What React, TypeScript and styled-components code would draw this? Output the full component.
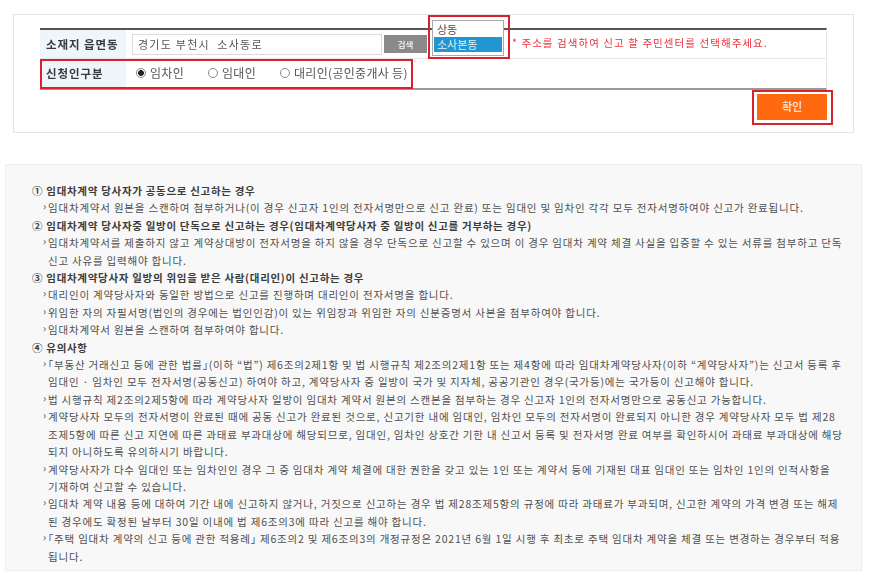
import React from "react";
import styled, { createGlobalStyle } from "styled-components";

const Global = createGlobalStyle`
  html, body { margin: 0; padding: 0; background: #fff; }
  body { font-family: "Noto Sans CJK KR", "Noto Sans", sans-serif; color: #444; }
`;
const Page = styled.div`
  width: 869px;
  height: 585px;
  overflow: hidden;
  box-sizing: border-box;
  padding: 14px 7px 0 5px;
  display: flex;
  flex-direction: column;
  gap: 31px;
  filter: blur(0.3px);
`;
const FormPanel = styled.section`
  position: relative;
  box-sizing: border-box;
  margin: 0 8px 0 8px;
  height: 119px;
  padding: 13px 26px 0 26px;
  border: 1px solid #e4e4e4;
`;
const FormTable = styled.div`
  border-top: 2px solid #555;
  border-bottom: 2px solid #999;
  border-right: 1px solid #e6e6e6;
`;
const Row = styled.div<{ $line?: boolean }>`
  display: flex;
  height: 29px;
  box-sizing: border-box;
  border-bottom: ${p => (p.$line ? "1px solid #e6e6e6" : "none")};
`;
const Label = styled.div`
  width: 86px;
  flex: none;
  box-sizing: border-box;
  padding-left: 6px;
  background: #eef5fb;
  font-size: 11.5px;
  font-weight: 700;
  line-height: 28px;
  letter-spacing: 0.9px;
  color: #3a3a3a;
  white-space: nowrap;
`;
const Cell = styled.div`
  flex: 1;
  display: flex;
  align-items: center;
  padding-left: 6px;
  min-width: 0;
`;
const AddressInput = styled.div`
  box-sizing: border-box;
  width: 250px;
  height: 21px;
  border: 1px solid #dcdcdc;
  padding-left: 5px;
  font-size: 11px;
  line-height: 18px;
  letter-spacing: 1.25px;
  color: #555;
  white-space: pre;
`;
const SearchButton = styled.div`
  width: 43px;
  height: 18px;
  margin-left: 2px;
  background: #8a8a8a;
  color: #e8e8e8;
  font-size: 8.5px;
  font-weight: 700;
  line-height: 18px;
  text-align: center;
`;
const ListBox = styled.div`
  box-sizing: border-box;
  width: 72px;
  height: 36px;
  margin: -13px 0 0 5px;
  border: 1px solid #aaa;
  background: #fff;
  padding: 1px;
  font-size: 11px;
  line-height: 14px;
  position: relative;
  z-index: 1;
`;
const ListOption = styled.div<{ $selected?: boolean }>`
  height: 15px;
  padding-left: 3px;
  background: ${p => (p.$selected ? "#2196d3" : "#fff")};
  color: ${p => (p.$selected ? "#dff1fb" : "#555")};
`;
const Note = styled.div`
  margin: -3px 0 0 8px;
  color: #ee2f3c;
  font-size: 10.5px;
  letter-spacing: 1.07px;
  white-space: nowrap;
`;
const RadioGroup = styled.div`
  display: flex;
  align-items: center;
  padding-left: 4px;
  margin-top: -2px;
`;
const RadioItem = styled.label<{ $width: number }>`
  display: flex;
  align-items: center;
  gap: 4px;
  width: ${p => p.$width}px;
  font-size: 12px;
  letter-spacing: 0.3px;
  color: #555;
  white-space: nowrap;
`;
const RadioMark = styled.span<{ $on?: boolean }>`
  box-sizing: border-box;
  flex: none;
  width: 10px;
  height: 10px;
  border-radius: 50%;
  border: 1px solid #888;
  background: ${p => (p.$on ? "radial-gradient(circle, #222 0 2.6px, #fff 3.2px)" : "#fff")};
`;
const Highlight = styled.div<{ $x: number; $y: number; $w: number; $h: number }>`
  position: absolute;
  box-sizing: border-box;
  left: ${p => p.$x}px;
  top: ${p => p.$y}px;
  width: ${p => p.$w}px;
  height: ${p => p.$h}px;
  border: 2px solid #d9202f;
  z-index: 2;
  pointer-events: none;
`;
const ConfirmBar = styled.div`
  display: flex;
  justify-content: flex-end;
  padding-top: 4px;
`;
const ConfirmButton = styled.div`
  width: 70px;
  height: 26px;
  background: #ff6a10;
  color: #f5dcc8;
  font-size: 11px;
  font-weight: 700;
  line-height: 25px;
  text-align: center;
`;
const NoticePanel = styled.section`
  box-sizing: border-box;
  height: 407px;
  padding: 17px 0 0 26px;
  background: #f8f8f8;
  border: 1px solid #eeeeee;
  overflow: hidden;
`;
const Heading = styled.div`
  font-size: 10.5px;
  font-weight: 700;
  line-height: 17.4px;
  letter-spacing: 0.7px;
  color: #3c3c3c;
  white-space: pre;
`;
const Item = styled.div`
  position: relative;
  padding-left: 16px;
  font-size: 10.5px;
  line-height: 17.4px;
  letter-spacing: 0.8px;
  color: #4f4f4f;
  &::before {
    content: "›";
    position: absolute;
    left: 11px;
    top: -2px;
  }
`;
const Line = styled.div`
  white-space: pre;
`;
const Corner = styled.span`
  font-feature-settings: "halt";
`;

type Block = { h: string; items: string[][] };
const blocks: Block[] = [
  { h: "① 임대차계약 당사자가 공동으로 신고하는 경우", items: [
    ["임대차계약서 원본을 스캔하여 첨부하거나(이 경우 신고자 1인의 전자서명만으로 신고 완료) 또는 임대인 및 임차인 각각 모두 전자서명하여야 신고가 완료됩니다."],
  ]},
  { h: "② 임대차계약 당사자중 일방이 단독으로 신고하는 경우(임대차계약당사자 중 일방이 신고를 거부하는 경우)", items: [
    ["임대차계약서를 제출하지 않고 계약상대방이 전자서명을 하지 않을 경우 단독으로 신고할 수 있으며 이 경우 임대차 계약 체결 사실을 입증할 수 있는 서류를 첨부하고 단독", "신고 사유를 입력해야 합니다."],
  ]},
  { h: "③ 임대차계약당사자 일방의 위임을 받은 사람(대리인)이 신고하는 경우", items: [
    ["대리인이 계약당사자와 동일한 방법으로 신고를 진행하며 대리인이 전자서명을 합니다."],
    ["위임한 자의 자필서명(법인의 경우에는 법인인감)이 있는 위임장과 위임한 자의 신분증명서 사본을 첨부하여야 합니다."],
    ["임대차계약서 원본을 스캔하여 첨부하여야 합니다."],
  ]},
  { h: "④ 유의사항", items: [
    ["「부동산 거래신고 등에 관한 법률」(이하 “법”) 제6조의2제1항 및 법 시행규칙 제2조의2제1항 또는 제4항에 따라 임대차계약당사자(이하 “계약당사자”)는 신고서 등록 후", "임대인 · 임차인 모두 전자서명(공동신고) 하여야 하고, 계약당사자 중 일방이 국가 및 지자체, 공공기관인 경우(국가등)에는 국가등이 신고해야 합니다."],
    ["법 시행규칙 제2조의2제5항에 따라 계약당사자 일방이 임대차 계약서 원본의 스캔본을 첨부하는 경우 신고자 1인의 전자서명만으로 공동신고 가능합니다."],
    ["계약당사자 모두의 전자서명이 완료된 때에 공동 신고가 완료된 것으로, 신고기한 내에 임대인, 임차인 모두의 전자서명이 완료되지 아니한 경우 계약당사자 모두 법 제28", "조제5항에 따른 신고 지연에 따른 과태료 부과대상에 해당되므로, 임대인, 임차인 상호간 기한 내 신고서 등록 및 전자서명 완료 여부를 확인하시어 과태료 부과대상에 해당", "되지 아니하도록 유의하시기 바랍니다."],
    ["계약당사자가 다수 임대인 또는 임차인인 경우 그 중 임대차 계약 체결에 대한 권한을 갖고 있는 1인 또는 계약서 등에 기재된 대표 임대인 또는 임차인 1인의 인적사항을", "기재하여 신고할 수 있습니다."],
    ["임대차 계약 내용 등에 대하여 기간 내에 신고하지 않거나, 거짓으로 신고하는 경우 법 제28조제5항의 규정에 따라 과태료가 부과되며, 신고한 계약의 가격 변경 또는 해제", "된 경우에도 확정된 날부터 30일 이내에 법 제6조의3에 따라 신고를 해야 합니다."],
    ["「주택 임대차 계약의 신고 등에 관한 적용례」 제6조의2 및 제6조의3의 개정규정은 2021년 6월 1일 시행 후 최초로 주택 임대차 계약을 체결 또는 변경하는 경우부터 적용", "됩니다."],
  ]},
];

function withCorners(text: string) {
  return text.split(/([「」])/).map((part, i) =>
    part === "「" || part === "」" ? <Corner key={i}>{part}</Corner> : part
  );
}

export default function App() {
  return (
    <Page>
      <Global />
      <FormPanel>
        <FormTable>
          <Row $line>
            <Label>소재지 읍면동</Label>
            <Cell>
              <AddressInput>경기도 부천시  소사동로</AddressInput>
              <SearchButton>검색</SearchButton>
              <ListBox>
                <ListOption>상동</ListOption>
                <ListOption $selected>소사본동</ListOption>
              </ListBox>
              <Note>* 주소를 검색하여 신고 할 주민센터를 선택해주세요.</Note>
            </Cell>
          </Row>
          <Row>
            <Label>신청인구분</Label>
            <Cell>
              <RadioGroup>
                <RadioItem $width={72}><RadioMark $on />임차인</RadioItem>
                <RadioItem $width={72}><RadioMark />임대인</RadioItem>
                <RadioItem $width={130}><RadioMark />대리인(공인중개사 등)</RadioItem>
              </RadioGroup>
            </Cell>
          </Row>
        </FormTable>
        <ConfirmBar><ConfirmButton>확인</ConfirmButton></ConfirmBar>
        <Highlight $x={414} $y={0} $w={82} $h={44} />
        <Highlight $x={26} $y={44} $w={373} $h={30} />
        <Highlight $x={738} $y={75} $w={81} $h={35} />
      </FormPanel>
      <NoticePanel>
        {blocks.map(b => (
          <React.Fragment key={b.h}>
            <Heading>{b.h}</Heading>
            {b.items.map(lines => (
              <Item key={lines[0]}>
                {lines.map(l => <Line key={l}>{withCorners(l)}</Line>)}
              </Item>
            ))}
          </React.Fragment>
        ))}
      </NoticePanel>
    </Page>
  );
}
